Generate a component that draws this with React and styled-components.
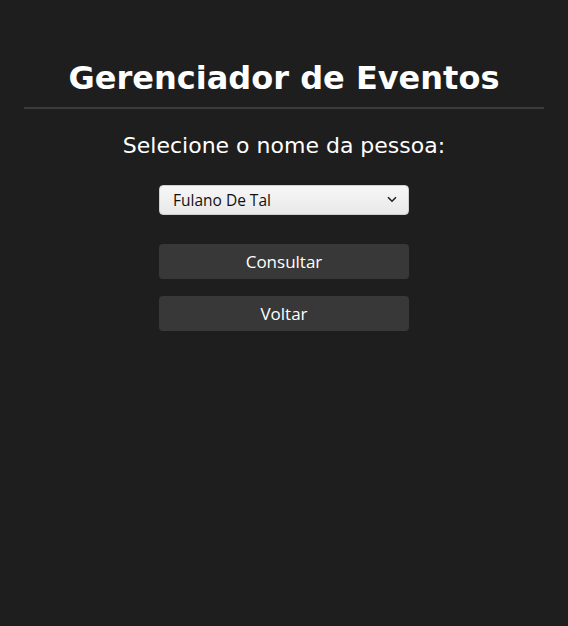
import React, { useState } from "react";
import styled, { createGlobalStyle } from "styled-components";

const GlobalStyle = createGlobalStyle`
  html, body {
    margin: 0;
    padding: 0;
    background: #1e1e1e;
    height: 100%;
  }
  #root {
    min-height: 100vh;
  }
`;

const Page = styled.div`
  min-height: 100vh;
  background: #1e1e1e;
  padding: 56px 24px 0;
  box-sizing: border-box;
  display: flex;
  flex-direction: column;
  align-items: center;
  font-family: "DejaVu Sans", sans-serif;
  color: #fff;
`;

const Title = styled.h1`
  margin: 0;
  font-size: 32px;
  font-weight: bold;
  line-height: 44px;
  text-align: center;
`;

const Divider = styled.hr`
  align-self: stretch;
  margin: 7px 0 0;
  border: 0;
  height: 2px;
  background: #3a3a3a;
`;

const Label = styled.p`
  margin: 23px 0 0;
  font-size: 22px;
  line-height: 28px;
`;

const Form = styled.div`
  width: 250px;
  margin-top: 25px;
  display: flex;
  flex-direction: column;
  gap: 17px;
`;

const SelectBox = styled.div`
  position: relative;
  height: 30px;
  margin-bottom: 12px;
`;

const Select = styled.select`
  appearance: none;
  width: 100%;
  height: 100%;
  padding: 0 30px 0 13px;
  border: 1px solid #cfcfcf;
  border-radius: 4px;
  background: linear-gradient(#f7f7f7, #e9e9e9);
  color: #111;
  font-family: "Open Sans", sans-serif;
  font-size: 15.5px;
  outline: none;
`;

const Chevron = styled.svg`
  position: absolute;
  right: 12px;
  top: 11px;
  pointer-events: none;
`;

const Button = styled.button`
  height: 35px;
  border: 0;
  border-radius: 4px;
  background: #383838;
  color: #fff;
  font-family: "Open Sans", sans-serif;
  font-size: 17px;
  cursor: pointer;
`;

export default function App() {
  const [pessoa, setPessoa] = useState("Fulano De Tal");
  return (
    <>
      <GlobalStyle />
      <Page>
        <Title>Gerenciador de Eventos</Title>
        <Divider />
        <Label>Selecione o nome da pessoa:</Label>
        <Form>
          <SelectBox>
            <Select value={pessoa} onChange={(e) => setPessoa(e.target.value)}>
              <option>Fulano De Tal</option>
            </Select>
            <Chevron width="10" height="7" viewBox="0 0 10 7">
              <path d="M1 1.2l4 4 4-4" fill="none" stroke="#222" strokeWidth="1.6" />
            </Chevron>
          </SelectBox>
          <Button>Consultar</Button>
          <Button>Voltar</Button>
        </Form>
      </Page>
    </>
  );
}
